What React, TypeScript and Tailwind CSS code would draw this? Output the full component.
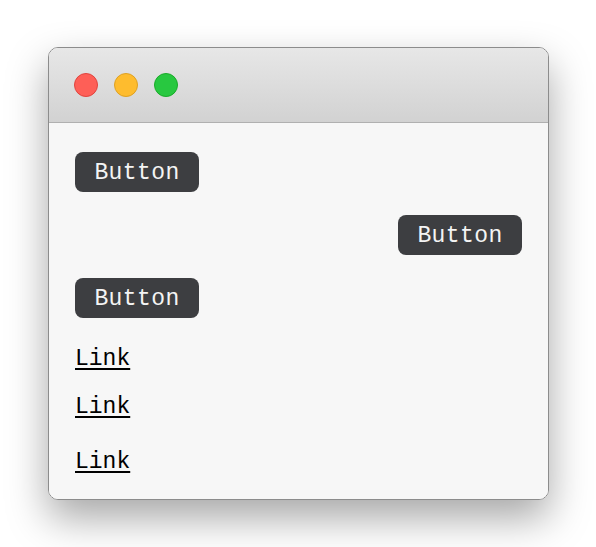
export default function App() {
  const mono = { fontFamily: '"Liberation Mono", "DejaVu Sans Mono", monospace' };
  return (
    <div className="w-[596px] h-[547px] bg-white pt-[47px] pl-[48px]">
      <div className="w-[501px] h-[453px] rounded-[10px] border border-[#8c8c8c] overflow-hidden shadow-[0_18px_40px_rgba(0,0,0,0.35)] flex flex-col">
        <div className="h-[75px] shrink-0 bg-gradient-to-b from-[#e7e7e7] to-[#d2d2d2] border-b border-[#b0b0b0] flex items-center pl-[25px] gap-[16px]">
          <div className="w-[24px] h-[24px] rounded-full bg-[#fe5f57] border border-[#e0443e]" />
          <div className="w-[24px] h-[24px] rounded-full bg-[#febc2e] border border-[#dea123]" />
          <div className="w-[24px] h-[24px] rounded-full bg-[#28c840] border border-[#1aab29]" />
        </div>
        <div className="flex-1 bg-[#f7f7f7] px-[26px] pt-[29px] flex flex-col" style={mono}>
          <button className="self-start w-[124px] h-[40px] pt-[3px] rounded-[8px] bg-[#3d3e41] text-[#f4f4f4] text-[23px] tracking-[0.4px] leading-none">Button</button>
          <button className="self-end mt-[23px] w-[124px] h-[40px] pt-[3px] rounded-[8px] bg-[#3d3e41] text-[#f4f4f4] text-[23px] tracking-[0.4px] leading-none">Button</button>
          <button className="self-start mt-[23px] w-[124px] h-[40px] pt-[3px] rounded-[8px] bg-[#3d3e41] text-[#f4f4f4] text-[23px] tracking-[0.4px] leading-none">Button</button>
          <a href="#" className="self-start mt-[28px] text-[23px] leading-[26px] text-black underline decoration-2 underline-offset-[3px]">Link</a>
          <a href="#" className="self-start mt-[22px] text-[23px] leading-[26px] text-black underline decoration-2 underline-offset-[3px]">Link</a>
          <a href="#" className="self-start mt-[29px] text-[23px] leading-[26px] text-black underline decoration-2 underline-offset-[3px]">Link</a>
        </div>
      </div>
    </div>
  );
}
